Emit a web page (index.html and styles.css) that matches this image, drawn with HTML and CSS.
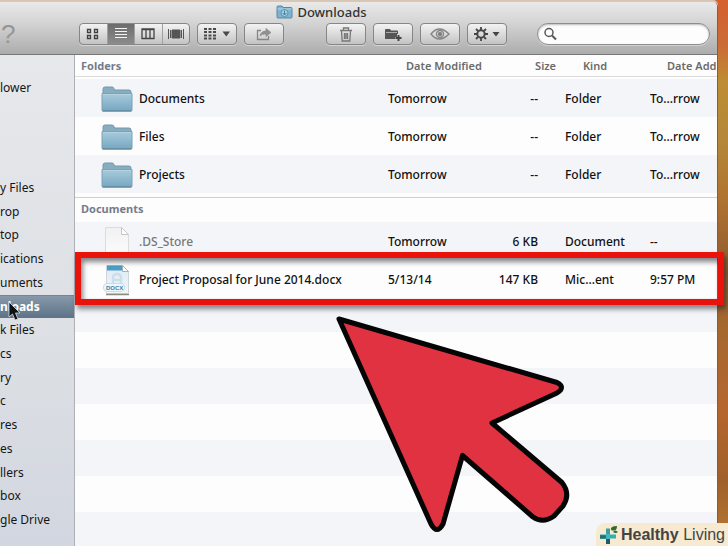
FILE: index.html
```html
<!DOCTYPE html>
<html lang="en">
<head>
<meta charset="utf-8">
<title>Downloads</title>
<link rel="stylesheet" href="styles.css">
</head>
<body>
<svg class="defs" aria-hidden="true">
  <defs>
    <linearGradient id="front" x1="0" y1="0" x2="0" y2="1">
      <stop offset="0" stop-color="#a9cbdc"/><stop offset="1" stop-color="#76a7c1"/>
    </linearGradient>
    <linearGradient id="paper" x1="0" y1="0" x2="0" y2="1">
      <stop offset="0" stop-color="#f1f1f1"/><stop offset="1" stop-color="#fdfdfd"/>
    </linearGradient>
    <linearGradient id="sheet" x1="0" y1="0" x2="0" y2="1">
      <stop offset="0" stop-color="#dce9f2"/><stop offset="1" stop-color="#f4f7fa"/>
    </linearGradient>
    <symbol id="folder" viewBox="0 0 32 26">
      <path d="M2 9V3q0-2 2-2h7q1.500 0 2 1.500l.5 1.500H28q2 0 2 2v3z" fill="#86adc0" stroke="#7398aa"/>
      <path d="M1 7.500h30V24q0 1-1 1H2q-1 0-1-1z" fill="url(#front)" stroke="#7ba2b6"/>
      <path d="M2 8.500h28" stroke="#b5d2df"/>
      <path d="M1.500 25h29" stroke="#587a8d"/>
    </symbol>
  </defs>
</svg>
<div class="window">
  <header class="toolbar">
    <h1 class="title">
      <svg width="17" height="15" viewBox="0 0 17 15" aria-hidden="true"><path d="M1 13V3q0-1 1-1h4l1 1.500h8q1 0 1 1V13q0 1-1 1H2q-1 0-1-1z" fill="#7db3cf" stroke="#5688a4"/><path d="M1.500 5h14" stroke="#b5d7e6"/><circle cx="8.500" cy="9" r="3.500" fill="#a5cfe2" stroke="#5a93b1"/><path d="M8.500 6.500v4M6.700 9l1.800 2 1.800-2" fill="none" stroke="#487f9d"/></svg>
      Downloads
    </h1>
    <div class="tools">
      <button class="help" aria-label="Help">?</button>
      <div class="segments">
        <button aria-label="Icon view"><svg width="14" height="12" fill="none" stroke="#404040" stroke-width="1.300"><path d="M1.500 1.500h3v3h-3zM8.500 1.500h3v3h-3zM1.500 7.500h3v3h-3zM8.500 7.500h3v3h-3z"/></svg></button>
        <button class="active" aria-label="List view"><svg width="14" height="12" stroke="#f4f4f4"><path d="M1 .5h12M1 3.500h12M1 6.500h12M1 9.500h12"/></svg></button>
        <button aria-label="Column view"><svg width="14" height="12" fill="none" stroke="#444" stroke-width="1.300"><path d="M1 1h12v9.500H1zM5 1v10M9 1v10M1 1.500h12"/></svg></button>
        <button aria-label="Cover flow"><svg width="16" height="12" stroke="#555"><path d="M.5 1v10M2.500 2v8M13.500 2v8M15.500 1v10"/><path d="M4 2h8v8H4z" fill="#555"/></svg></button>
      </div>
      <button class="tool" aria-label="Arrange"><svg width="28" height="14" fill="#4a4a4a"><path d="M1 1h3v2H1zM5.500 1h3v2h-3zM10 1h3v2h-3zM1 4h3v2H1zM5.500 4h3v2h-3zM10 4h3v2h-3zM1 7.500h3v2H1zM5.500 7.500h3v2h-3zM10 7.500h3v2h-3zM1 10.500h3v2H1zM5.500 10.500h3v2h-3zM10 10.500h3v2h-3zM19.500 4.500h7.500l-3.700 5z"/></svg></button>
      <button class="tool" aria-label="Share"><svg width="16" height="14" fill="none" stroke="#858585" stroke-width="1.300"><path d="M5 3.500H1.500v9h11V9"/><path d="M4 9q1-5 6-5V1.500l5 4-5 4V7Q6 6.500 4 9z" fill="#909090" stroke-width=".6"/></svg></button>
      <button class="tool apart" aria-label="Delete"><svg width="14" height="15" fill="none" stroke="#777" stroke-width="1.300"><path d="M1 3.500h12M4.500 3V1h5v2M2.500 4l.7 10h7.600l.7-10M5.500 6v6M7 6v6M8.500 6v6"/></svg></button>
      <button class="tool" aria-label="New folder"><svg width="19" height="15"><path d="M1 12V3q0-1 1-1h4l1 1.500h6q1 0 1 1V7h-1v3h-2v2z" fill="#555"/><path d="M2 5.500h11" stroke="#aaa"/><path d="M14.500 8v6M11.500 11h6" stroke="#444" stroke-width="2"/></svg></button>
      <button class="tool" aria-label="Quick look"><svg width="20" height="14" fill="none" stroke="#858585" stroke-width="1.400"><path d="M1 7q8-10 18 0-10 10-18 0z"/><circle cx="10" cy="7" r="3.500"/><circle cx="10" cy="7" r="1.500" fill="#777"/></svg></button>
      <button class="tool" aria-label="Actions"><svg width="28" height="16"><g stroke="#464646" fill="none"><circle cx="8" cy="8" r="3.700" stroke-width="2"/><path d="M8 1v3M8 12v3M1 8h3M12 8h3M3 3l2 2M11 11l2 2M13 3l-2 2M5 11l-2 2" stroke-width="1.800"/></g><path d="M19.500 6h7l-3.500 4.500z" fill="#444"/></svg></button>
      <label class="search">
        <svg width="13" height="14" fill="none" stroke="#585858" aria-hidden="true"><circle cx="5" cy="5.500" r="4" stroke-width="1.500"/><path d="M8 8.500l4 4" stroke-width="2"/></svg>
        <input type="search" aria-label="Search">
      </label>
    </div>
  </header>
  <div class="body">
    <nav class="sidebar" aria-label="Places">
      <a class="account" href="#">lower</a>
      <ul>
        <li><a href="#">y Files</a></li>
        <li><a href="#">rop</a></li>
        <li><a href="#">top</a></li>
        <li><a href="#">ications</a></li>
        <li><a href="#">uments</a></li>
        <li><a class="selected" href="#">nloads</a></li>
        <li><a href="#">k Files</a></li>
        <li><a href="#">cs</a></li>
        <li><a href="#">ry</a></li>
        <li><a href="#">c</a></li>
        <li><a href="#">res</a></li>
        <li><a href="#">es</a></li>
        <li><a href="#">llers</a></li>
        <li><a href="#">box</a></li>
        <li><a href="#">gle Drive</a></li>
      </ul>
    </nav>
    <main class="files">
      <table>
        <colgroup><col><col class="c-date"><col class="c-size"><col class="c-kind"><col class="c-added"></colgroup>
        <thead>
          <tr><th class="group">Folders</th><th class="date">Date Modified</th><th class="size">Size</th><th class="kind">Kind</th><th class="added">Date Add</th></tr>
        </thead>
        <tbody class="folders">
          <tr><td><span class="name"><svg width="32" height="26"><use href="#folder"/></svg>Documents</span></td><td>Tomorrow</td><td class="size">--</td><td class="kind">Folder</td><td class="added">To...rrow</td></tr>
          <tr><td><span class="name"><svg width="32" height="26"><use href="#folder"/></svg>Files</span></td><td>Tomorrow</td><td class="size">--</td><td class="kind">Folder</td><td class="added">To...rrow</td></tr>
          <tr><td><span class="name"><svg width="32" height="26"><use href="#folder"/></svg>Projects</span></td><td>Tomorrow</td><td class="size">--</td><td class="kind">Folder</td><td class="added">To...rrow</td></tr>
        </tbody>
        <tbody class="documents">
          <tr class="section"><th class="group" colspan="5">Documents</th></tr>
          <tr><td><span class="name dim"><svg width="32" height="32" viewBox="0 0 32 32"><path d="M4.500 1.500h16l7 7v23h-23z" fill="url(#paper)" stroke="#dcdcdc"/><path d="M20.500 1.500v7h7z" fill="#fff" stroke="#c6c6c6"/></svg>.DS_Store</span></td><td>Tomorrow</td><td class="size">6 KB</td><td class="kind">Document</td><td class="added">--</td></tr>
          <tr><td><span class="name"><svg width="32" height="32" viewBox="0 0 32 32"><path d="M5.500 1.500h16l6 6v22h-22z" fill="url(#sheet)" stroke="#ccd6dc"/><path d="M6 1.500h15.500v5H6z" fill="#4b9cc6"/><path d="M21.500 1.500v6h6z" fill="#fff" stroke="#9fb4bf"/><path d="M12 21v-7q0-4 4-4t4 4v7M12 16h8" fill="none" stroke="#cbdfeb" stroke-width="2.500"/><path d="M5 30.500h23" stroke="#8d8d80" stroke-width="1.500"/><rect x="2.500" y="19.500" width="21" height="8" rx="3.500" fill="#eef8fd" stroke="#c3dfec"/><text class="badge" x="5" y="26">DOCX</text></svg>Project Proposal for June 2014.docx</span></td><td>5/13/14</td><td class="size">147 KB</td><td class="kind">Mic...ent</td><td class="added">9:57 PM</td></tr>
        </tbody>
      </table>
      <div class="stripes"></div>
    </main>
  </div>
</div>
<div class="highlight"></div>
<svg class="arrow" width="240" height="222" viewBox="334 314 240 222" aria-hidden="true">
  <path d="M339 319L557 382.500Q566 387 557 393L492 423 562 482.500Q571 494 563 506L554 516Q543 524 533 517L462.500 455.500 443 524Q437 535 431 524z" fill="#e03241" stroke="#050505" stroke-width="5" stroke-linejoin="round"/>
</svg>
<svg class="pointer" width="14" height="21" viewBox="0 0 14 21" aria-hidden="true"><path d="M1 1v15l3.500-3 2.500 6 3-1-2.500-6H12z" fill="#111" stroke="#ddd" stroke-width=".8"/></svg>
<footer class="brand">
  <svg width="20" height="20" viewBox="0 0 20 20" aria-hidden="true"><path d="M9 3.500v6" stroke="#3b9f9f" stroke-width="4"/><path d="M1 11.500h16" stroke="#2fb0b6" stroke-width="4"/><path d="M1 12h7" stroke="#247078" stroke-width="3.500"/><path d="M9 9v6" stroke="#40b8bd" stroke-width="4"/><path d="M9 14v5" stroke="#1f5b66" stroke-width="4"/><path d="M12 5q-1-4 6-4 0 6-6 4zM14 7q2-3 5 0-2 2-5 0z" fill="#2f6b35"/></svg>
  <span><b>Healthy</b> Living</span>
</footer>
</body>
</html>
```
FILE: styles.css
```css
* { box-sizing: border-box; }

body {
  margin: 0;
  position: relative;
  overflow: hidden;
  min-height: 100vh;
  padding: 2px 10px 0 0;
  display: flex;
  font: 12px/16px "Noto Sans", "Open Sans", sans-serif;
  color: #111;
  background: linear-gradient(#d5602f, #cb6a35 8%, #bd8d33 15%, #b5893a 25%, #b07430 36%, #8f5a30 50%, #a5682f 60%, #b5662e 75%, #a0602b 88%, #b87a36);
}

.defs { position: absolute; width: 0; height: 0; }

button, input { font: inherit; color: inherit; }

.window {
  flex: 1;
  min-width: 0;
  display: flex;
  flex-direction: column;
  border-right: 1px solid #80603f;
  border-radius: 0 5px 0 0;
  overflow: hidden;
  box-shadow: 0 -2px 0 #d9c6b4;
  background: #fdfdfd;
}

.toolbar {
  height: 53px;
  background: linear-gradient(#e9e9e9, #d4d4d4 40%, #acacac);
  border-bottom: 1px solid #777;
}

.title {
  display: flex;
  justify-content: center;
  align-items: center;
  gap: 4px;
  height: 19px;
  margin: 0;
  padding-right: 74px;
  font-size: 13px;
  font-weight: 500;
  color: #333;
}

.tools { display: flex; align-items: center; gap: 7px; height: 26px; padding-right: 7px; }
.tools button { display: flex; align-items: center; justify-content: center; padding: 0; }

.tools .help {
  width: 72px;
  padding-left: 1px;
  justify-content: flex-start;
  border: 0;
  background: none;
  font: 26px/22px "Liberation Sans", sans-serif;
  color: #969696;
}

.segments, .tool {
  height: 22px;
  border: 1px solid #868686;
  border-radius: 4px;
  background: linear-gradient(#f3f3f3, #c3c3c3);
  box-shadow: 0 1px 0 #d5d5d5;
}
.segments { display: flex; width: 111px; overflow: hidden; }
.segments button { flex: 1; border: 0; border-right: 1px solid #a0a0a0; background: none; }
.segments button:last-child { border-right: 0; }
.segments .active { background: linear-gradient(#6c6c6c, #8c8c8c); }
.tool { width: 40px; }
.apart { margin-left: 35px; }

.search {
  flex: 1;
  min-width: 0;
  display: flex;
  align-items: center;
  gap: 4px;
  height: 22px;
  margin-left: 23px;
  padding: 0 6px;
  border: 1px solid #8d8d8d;
  border-radius: 11px;
  background: #fdfdfd;
  box-shadow: inset 0 1px 2px #bbb, 0 1px 0 #d0d0d0;
}
.search input { flex: 1; min-width: 0; border: 0; outline: 0; background: none; }

.body { flex: 1; display: flex; }

.sidebar {
  flex: 0 0 75px;
  display: flex;
  flex-direction: column;
  padding: 21px 0 14px;
  border-right: 1px solid #aeb0b6;
  background: linear-gradient(#e6e8ec, #dcdfe3 60%, #d2d6e0);
}
.sidebar a { display: flex; align-items: center; height: 100%; color: #151515; text-decoration: none; }
.sidebar .account { height: 24px; margin-bottom: 76px; }
.sidebar ul { flex: 1; display: flex; flex-direction: column; margin: 0; padding: 0; list-style: none; }
.sidebar li { flex: 1; }
.sidebar .selected {
  color: #fff;
  font-weight: 700;
  background: linear-gradient(#8799aa, #5e7387);
  border-top: 1px solid #71869a;
}

.files { flex: 1; min-width: 0; display: flex; flex-direction: column; }

table { width: 100%; table-layout: fixed; border-collapse: separate; border-spacing: 0; font-weight: 500; }
.c-date { width: 96px; }
.c-size { width: 72px; }
.c-kind { width: 85px; }
.c-added { width: 76px; }

th, td { padding: 0; text-align: left; white-space: nowrap; }
th { height: 22px; font-size: 11px; font-weight: 600; color: #6b6b6b; }
thead th { border-bottom: 1px solid #dcdcdc; }
th.group { padding-left: 6px; font-weight: 700; color: #757b8d; }
th.date { padding-left: 18px; }
th.size { text-align: right; }
th.kind { padding-left: 27px; }
th.added { padding-left: 26px; }
.section th { height: 25px; padding-bottom: 2px; border-top: 1px solid #cfcfcf; }

td { height: 38px; padding-top: 1px; }
td.size { padding-right: 18px; text-align: right; }
td.kind, td.added { padding-left: 9px; }
.name { display: flex; align-items: center; gap: 6px; padding-left: 26px; }
.dim { color: #777; }
.badge { font: 700 6px "Liberation Sans", sans-serif; fill: #3d7fa3; }

.folders tr:nth-child(odd) td, .documents tr:nth-child(2) td { background: #f4f5f8; }
.folders::before, .folders::after { content: ""; display: table-row; height: 2px; }
.folders::after { height: 4px; }

.stripes {
  flex: 1;
  background: repeating-linear-gradient(#f4f5f8 0 36px, #fdfdfd 36px 72px) 0 -2px;
}

.highlight {
  position: absolute;
  top: 252px;
  left: 75px;
  right: 4px;
  height: 53px;
  border: 6px solid #e9130b;
  box-shadow: 2px 4px 5px rgba(20, 20, 30, .5), inset 2px 4px 5px rgba(20, 20, 30, .5);
}

.arrow { position: absolute; left: 334px; top: 314px; }
.pointer { position: absolute; left: 8px; top: 301px; }

.brand {
  position: absolute;
  right: 0;
  bottom: 0;
  display: flex;
  align-items: center;
  gap: 2px;
  height: 23px;
  padding: 0 3px;
  border-radius: 9px 0 0 0;
  background: #f7ead1;
  color: #444;
  font: 16px/23px "Liberation Sans", sans-serif;
}
```
